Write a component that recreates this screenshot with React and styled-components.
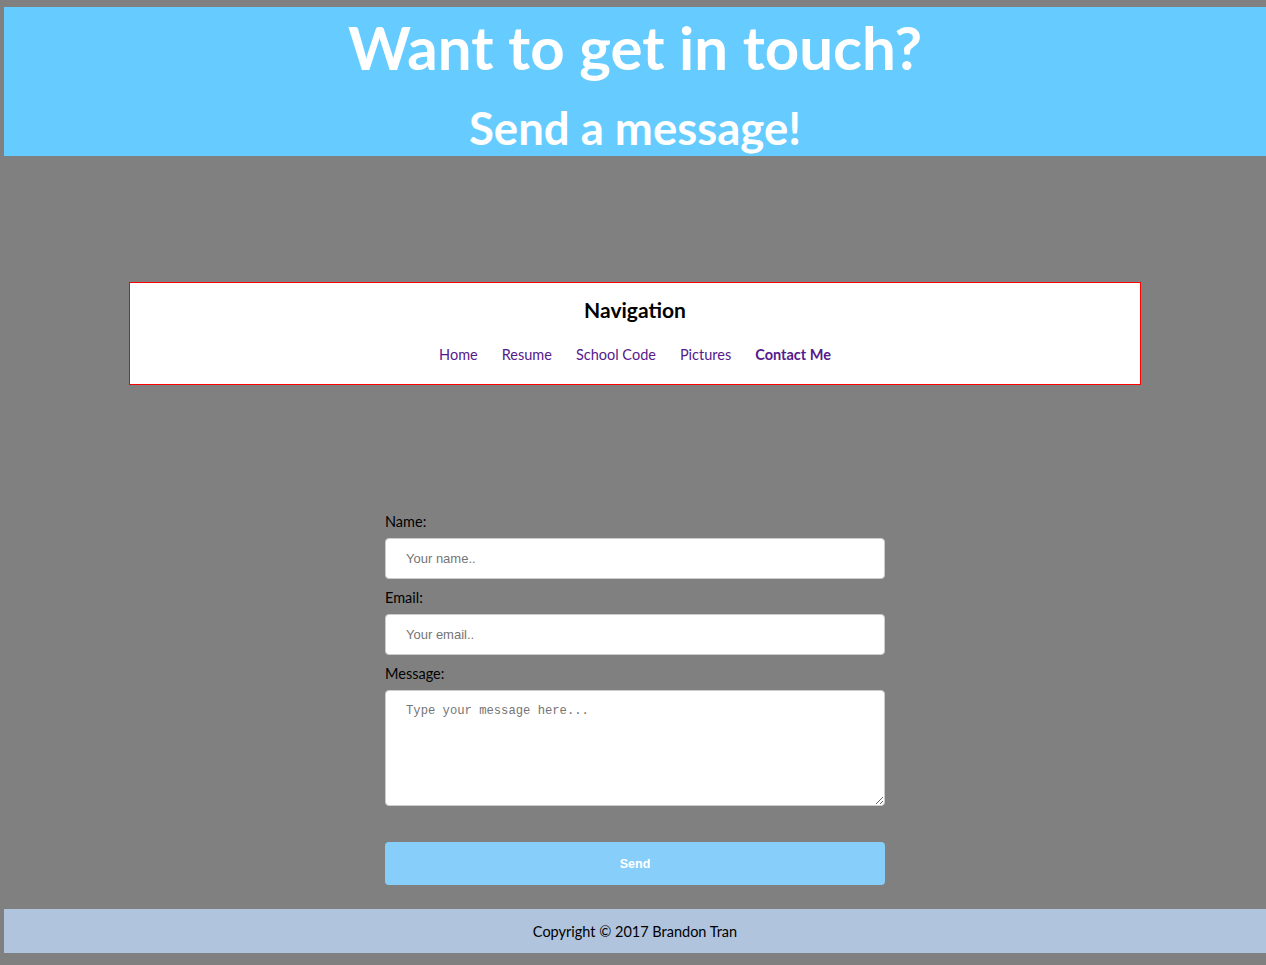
import styled, { createGlobalStyle } from "styled-components";

const GlobalStyle = createGlobalStyle`
  html, body {
    background-color: #808080;
  }
  body {
    margin: 7px 0 12px 4px;
    width: 1262px;
    font-family: Lato, "Open Sans", sans-serif;
    overflow: hidden;
  }
`;

const links = ["Home", "Resume", "School Code", "Pictures", "Contact Me"];

export default function App() {
  return (
    <>
      <GlobalStyle />
      <Header>
        <Title>Want to get in touch?</Title>
        <SubTitle>Send a message!</SubTitle>
      </Header>
      <NavBox>
        <NavHeading>Navigation</NavHeading>
        <NavList>
          {links.map((link) => (
            <NavLink key={link} href="#" $active={link === "Contact Me"}>
              {link}
            </NavLink>
          ))}
        </NavList>
      </NavBox>
      <ContactForm onSubmit={(event) => event.preventDefault()}>
        <Label htmlFor="name">Name:</Label>
        <TextInput id="name" type="text" placeholder="Your name.." />
        <Label htmlFor="email">Email:</Label>
        <TextInput id="email" type="text" placeholder="Your email.." />
        <Label htmlFor="message">Message:</Label>
        <MessageArea id="message" placeholder="Type your message here..." />
        <SendButton type="submit">Send</SendButton>
      </ContactForm>
      <Footer>Copyright © 2017 Brandon Tran</Footer>
    </>
  );
}

const Header = styled.header`
  background-color: #66ccff;
  color: #ffffff;
  text-align: center;
  padding-top: 7px;
  height: 149px;
  box-sizing: border-box;
`;

const Title = styled.h1`
  margin: 0;
  font-size: 60px;
  line-height: 66px;
  font-weight: 700;
`;

const SubTitle = styled.h2`
  margin: 20px 0 0;
  font-size: 45.5px;
  line-height: 56px;
  font-weight: 700;
`;

const NavBox = styled.nav`
  width: 80%;
  margin: 126px auto 0;
  border: 1px solid #ff0000;
  background-color: #ffffff;
  text-align: center;
  padding: 13px 0 19px;
`;

const NavHeading = styled.h3`
  margin: 0;
  font-size: 21px;
  line-height: 28px;
  font-weight: 700;
  color: #000000;
`;

const NavList = styled.div`
  display: flex;
  justify-content: center;
  gap: 24px;
  margin-top: 21px;
  line-height: 20px;
`;

const NavLink = styled.a`
  font-size: 14.5px;
  color: #551a8b;
  text-decoration: none;
  font-weight: ${(props) => (props.$active ? 700 : 400)};
`;

const ContactForm = styled.form`
  width: 500px;
  margin: 128px auto 0;
  display: flex;
  flex-direction: column;
`;

const Label = styled.label`
  font-size: 14.5px;
  line-height: 18px;
  color: #000000;
  margin: 10px 0 7px;

  &:first-child {
    margin-top: 0;
  }
`;

const TextInput = styled.input`
  box-sizing: border-box;
  height: 41px;
  border: 1px solid #cccccc;
  border-radius: 4px;
  padding: 0 20px;
  font-family: "Liberation Sans", Arial, sans-serif;
  font-size: 13px;
  background: #ffffff;

  &::placeholder {
    color: #757575;
  }
`;

const MessageArea = styled.textarea`
  box-sizing: border-box;
  height: 116px;
  border: 1px solid #cccccc;
  border-radius: 4px;
  padding: 13px 20px;
  font-family: "Liberation Mono", "DejaVu Sans Mono", monospace;
  font-size: 12.2px;
  background: #ffffff;

  &::placeholder {
    color: #757575;
  }
`;

const SendButton = styled.button`
  margin-top: 36px;
  height: 43px;
  border: none;
  border-radius: 4px;
  background-color: #87cefa;
  color: #ffffff;
  font-family: "Liberation Sans", Arial, sans-serif;
  font-size: 12.5px;
  font-weight: 700;
  cursor: pointer;
`;

const Footer = styled.footer`
  margin-top: 24px;
  height: 44px;
  background-color: #b0c4de;
  color: #000000;
  font-size: 14.5px;
  display: flex;
  align-items: center;
  justify-content: center;
`;
